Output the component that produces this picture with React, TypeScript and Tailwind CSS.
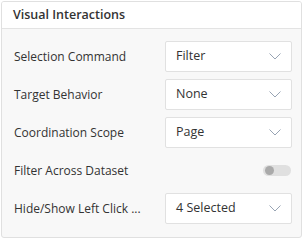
function Chevron() {
  return (
    <svg width="12" height="7" viewBox="0 0 12 7" fill="none" className="shrink-0">
      <path d="M0.5 0.5 L6 6 L11.5 0.5" stroke="#98a4b4" strokeWidth="1" />
    </svg>
  );
}

function Select({ value }: { value: string }) {
  return (
    <div className="flex h-[31px] w-[127px] items-center justify-between rounded-[2px] border border-[#e1e1e1] bg-white pl-[10px] pr-[10px]">
      <span className="text-[12.5px] text-[#333]">{value}</span>
      <Chevron />
    </div>
  );
}

function Row({ label, children }: { label: string; children: React.ReactNode }) {
  return (
    <div className="flex h-[31px] items-center justify-between">
      <span className="text-[12px] text-[#333]">{label}</span>
      {children}
    </div>
  );
}

export default function App() {
  return (
    <div className="h-[240px] w-[303px] bg-white p-px" style={{ fontFamily: '"Open Sans", sans-serif' }}>
      <div className="flex h-[237px] w-[301px] flex-col overflow-hidden rounded-[3px] border border-[#e0e0e0] bg-[#f8f8f8]">
        <div className="flex h-[27px] items-center border-b border-[#e3e3e3] bg-white pl-[11px]">
          <span className="text-[12.5px] font-semibold text-[#333]">Visual Interactions</span>
        </div>
        <div className="flex flex-col gap-[7px] pb-[12px] pl-[12px] pr-[9px] pt-[12px]">
          <Row label="Selection Command">
            <Select value="Filter" />
          </Row>
          <Row label="Target Behavior">
            <Select value="None" />
          </Row>
          <Row label="Coordination Scope">
            <Select value="Page" />
          </Row>
          <Row label="Filter Across Dataset">
            <div className="mr-px flex h-[11px] w-[28px] items-center rounded-full bg-[#e0e0e0] pl-[2px]">
              <div className="h-[9px] w-[9px] rounded-full bg-[#aaaaaa]" />
            </div>
          </Row>
          <Row label="Hide/Show Left Click ...">
            <Select value="4 Selected" />
          </Row>
        </div>
      </div>
    </div>
  );
}
